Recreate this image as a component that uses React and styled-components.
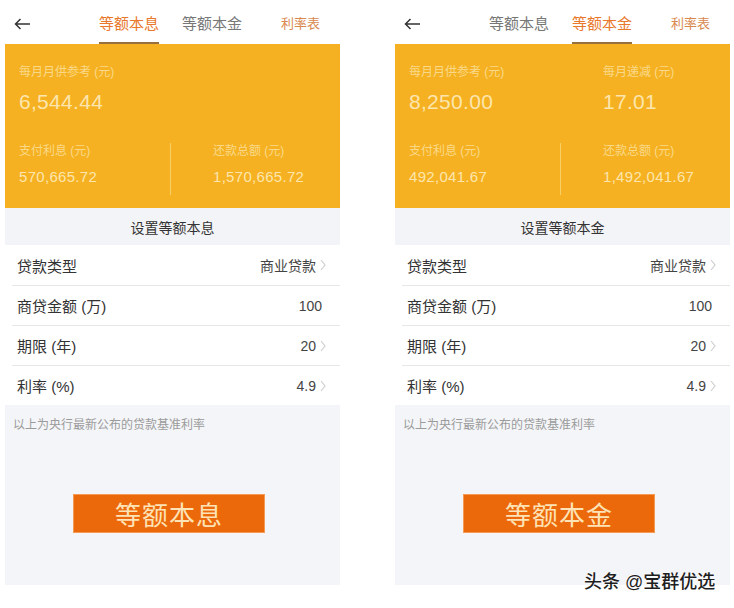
import React from "react";
import styled, { createGlobalStyle } from "styled-components";

const GlobalStyle = createGlobalStyle`
  html, body {
    margin: 0;
    padding: 0;
    background: #ffffff;
    font-family: "Liberation Sans", "Noto Sans CJK SC", sans-serif;
  }
`;

const Page = styled.div`
  position: relative;
  width: 734px;
  height: 608px;
  display: flex;
  padding-left: 5px;
  gap: 55px;
  box-sizing: border-box;
  overflow: hidden;
`;

const Phone = styled.div`
  width: 335px;
  display: flex;
  flex-direction: column;
`;

const Header = styled.div`
  height: 44px;
  display: flex;
  align-items: flex-start;
  background: #fff;
`;

const Back = styled.div`
  width: 17px;
  height: 44px;
  margin-left: 9px;
  display: flex;
  align-items: center;
  margin-top: 2px;
`;

const Tab = styled.div`
  height: 44px;
  box-sizing: border-box;
  margin-left: ${(p) => p.gap}px;
  padding-top: 14px;
  font-size: ${(p) => (p.small ? 13 : 15)}px;
  line-height: 20px;
  color: ${(p) => (p.active ? "#e8782c" : p.small ? "#d9894e" : "#777")};
  border-bottom: 2px solid ${(p) => (p.active ? "#98703e" : "transparent")};
  white-space: nowrap;
`;

const Card = styled.div`
  height: 164px;
  box-sizing: border-box;
  background: #f5b121;
  padding: 20px 0 13px;
  display: grid;
  grid-template-columns: 165px 1fr;
  grid-template-rows: auto 1fr;
  row-gap: 28px;
`;

const Cell = styled.div`
  padding-left: ${(p) => (p.right ? 42 : 13)}px;
  border-left: 1px solid ${(p) => (p.divider ? "#f8d068" : "transparent")};
  padding-bottom: ${(p) => (p.divider !== undefined ? 7 : 0)}px;
`;

const Label = styled.div`
  font-size: 12px;
  line-height: 16px;
  color: #fad98a;
`;

const Value = styled.div`
  margin-top: ${(p) => (p.big ? 9 : 8)}px;
  font-size: ${(p) => (p.big ? 21 : 15)}px;
  line-height: ${(p) => (p.big ? 26 : 20)}px;
  color: #fde6ae;
  letter-spacing: 0.3px;
`;

const SectionTitle = styled.div`
  height: 37px;
  background: #f3f4f7;
  display: flex;
  align-items: center;
  justify-content: center;
  font-size: 14px;
  color: #333;
`;

const Rows = styled.div`
  background: #fff;
`;

const Row = styled.div`
  height: 40px;
  display: flex;
  align-items: center;
  justify-content: space-between;
  padding: 0 ${(p) => (p.arrow ? 14 : 18)}px 0 12px;
  box-sizing: border-box;

  & + & {
    border-top: 1px solid #e7e7e9;
    margin-left: 7px;
    padding-left: 5px;
  }
`;

const RowLabel = styled.span`
  font-size: 15px;
  color: #333;
`;

const RowValue = styled.span`
  display: flex;
  align-items: center;
  gap: 4px;
  font-size: 14px;
  color: #444;
`;

const Bottom = styled.div`
  flex: 0 0 180px;
  background: #f4f5f8;
  padding: 11px 0 0 8px;
  box-sizing: border-box;
`;

const Note = styled.div`
  font-size: 12px;
  line-height: 18px;
  color: #9b9b9b;
`;

const Button = styled.div`
  margin: 60px 0 0 60px;
  width: 192px;
  height: 39px;
  box-sizing: border-box;
  background: #ec690b;
  border: 1px solid #f59a52;
  display: flex;
  align-items: center;
  justify-content: center;
  font-size: 26px;
  letter-spacing: 1px;
  color: #fde3b6;
`;

const Watermark = styled.div`
  position: absolute;
  left: 584px;
  top: 570px;
  font-size: 18px;
  line-height: 24px;
  font-weight: 500;
  color: #1e1e1e;
  text-shadow: 0 0 2px #fff, 0 0 2px #fff;
  white-space: nowrap;
`;

const Arrow = () => (
  <svg width="17" height="12" viewBox="0 0 17 12" fill="none">
    <path d="M16 6H1.5M6.5 1L1.5 6l5 5" stroke="#333" strokeWidth="1.5" />
  </svg>
);

const Chevron = () => (
  <svg width="6" height="12" viewBox="0 0 6 12" fill="none">
    <path d="M1 1l4 5-4 5" stroke="#cfcfd3" strokeWidth="1.2" />
  </svg>
);

const rows = [
  { label: "贷款类型", value: "商业贷款", arrow: true },
  { label: "商贷金额 (万)", value: "100" },
  { label: "期限 (年)", value: "20", arrow: true },
  { label: "利率 (%)", value: "4.9", arrow: true },
];

const Calculator = ({ mode, top, bottom }) => (
  <Phone>
    <Header>
      <Back>
        <Arrow />
      </Back>
      <Tab gap={68} active={mode === "等额本息"}>等额本息</Tab>
      <Tab gap={23} active={mode === "等额本金"}>等额本金</Tab>
      <Tab gap={39} small>利率表</Tab>
    </Header>
    <Card>
      {top.map((c, i) => (
        <Cell key={c.label} right={i === 1}>
          <Label>{c.label}</Label>
          <Value big>{c.value}</Value>
        </Cell>
      ))}
      {top.length === 1 && <Cell right />}
      {bottom.map((c, i) => (
        <Cell key={c.label} right={i === 1} divider={i === 1}>
          <Label>{c.label}</Label>
          <Value>{c.value}</Value>
        </Cell>
      ))}
    </Card>
    <SectionTitle>设置{mode}</SectionTitle>
    <Rows>
      {rows.map((r) => (
        <Row key={r.label} arrow={r.arrow}>
          <RowLabel>{r.label}</RowLabel>
          <RowValue>
            {r.value}
            {r.arrow && <Chevron />}
          </RowValue>
        </Row>
      ))}
    </Rows>
    <Bottom>
      <Note>以上为央行最新公布的贷款基准利率</Note>
      <Button>{mode}</Button>
    </Bottom>
  </Phone>
);

export default function App() {
  return (
    <>
      <GlobalStyle />
      <Page>
        <Calculator
          mode="等额本息"
          top={[{ label: "每月月供参考 (元)", value: "6,544.44" }]}
          bottom={[
            { label: "支付利息 (元)", value: "570,665.72" },
            { label: "还款总额 (元)", value: "1,570,665.72" },
          ]}
        />
        <Calculator
          mode="等额本金"
          top={[
            { label: "每月月供参考 (元)", value: "8,250.00" },
            { label: "每月递减 (元)", value: "17.01" },
          ]}
          bottom={[
            { label: "支付利息 (元)", value: "492,041.67" },
            { label: "还款总额 (元)", value: "1,492,041.67" },
          ]}
        />
        <Watermark>头条 @宝群优选</Watermark>
      </Page>
    </>
  );
}
